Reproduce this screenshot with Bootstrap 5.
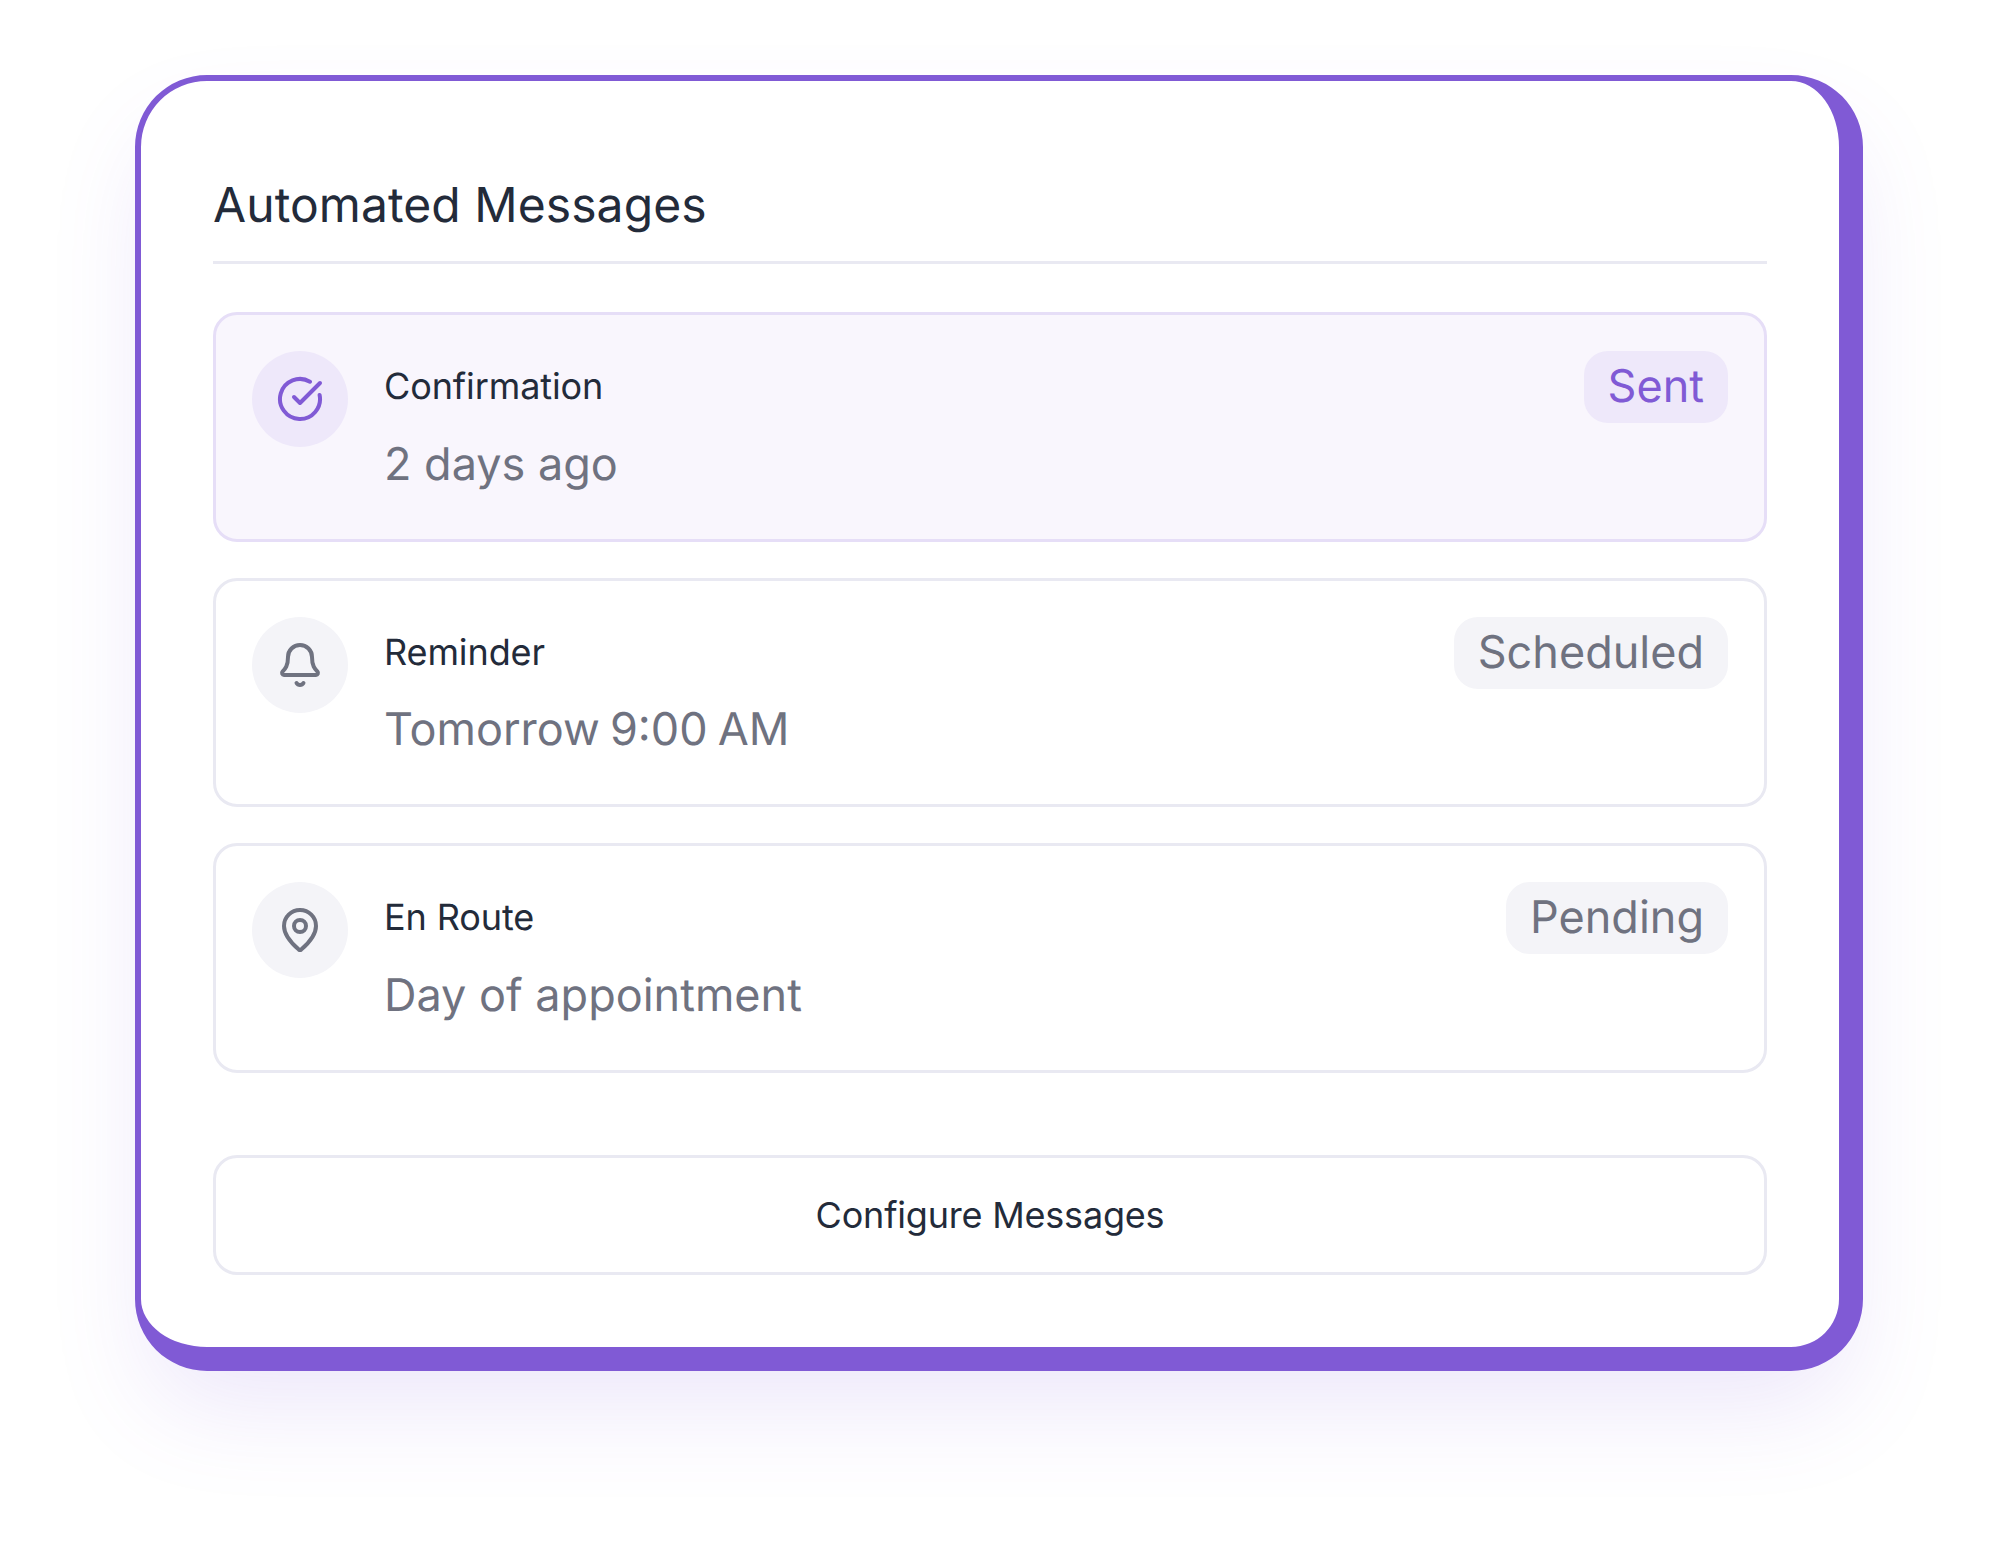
<!DOCTYPE html>
<html lang="en">
<head>
<meta charset="utf-8">
<title>Automated Messages</title>
<link rel="stylesheet" href="https://cdn.jsdelivr.net/npm/bootstrap@5.3.0/dist/css/bootstrap.min.css">
<style>
body { background:#fff; font-family:Inter,"Liberation Sans",sans-serif; color:#1f2937; padding:75px 135px; min-height:100vh; text-rendering:geometricPrecision; -webkit-font-smoothing:antialiased; }
.msg-panel { width:1728px; height:1296px; background:#fff; border:solid #805ad5; border-width:6px 24px 24px 6px; border-radius:72px; padding:72px; box-shadow:0 48px 100px -16px rgba(128,90,220,.15); }
.msg-title { font-size:48px; font-weight:400; line-height:72px; color:#232b3a; letter-spacing:.07px; margin:16px 0 48px; padding-bottom:20px; border-bottom:3px solid #e9e9f2; }
.msg-stack { gap:36px; }
.msg-item { border:3px solid #e9e9f2; border-radius:24px; padding:36px; height:229.5px; gap:36px; background:#fff; }
.msg-item.is-sent { background:#f9f6fd; border-color:#e6def7; }
.msg-ico { width:96px; height:96px; background:#f4f4f8; color:#6f7280; flex:none; }
.msg-ico svg { width:48px; height:48px; }
.is-sent .msg-ico { background:#eee8fa; color:#805ad5; }
.msg-name { font-size:36px; line-height:70px; margin-bottom:2px; font-weight:400; letter-spacing:-.1px; color:#232b3a; }
.msg-when { font-size:45px; line-height:67.5px; color:#6f7280; margin-top:8.5px; }
.msg-when-tight { word-spacing:-2.5px; }
.msg-tag { font-size:45px; line-height:70px; height:72px; padding:0 24px; border-radius:24px; background:#f4f4f8; color:#6f7280; }
.is-sent .msg-tag { background:#eee8fa; color:#805ad5; }
.msg-btn { display:block; width:100%; height:120px; margin-top:82.5px; font-size:36px; font-weight:400; letter-spacing:-.2px; color:#232b3a; background:#fff; border:3px solid #e9e9f2; border-radius:24px; }
.msg-btn:hover { background:#fff; border-color:#e9e9f2; color:#232b3a; }
</style>
</head>
<body>
<div class="msg-panel">
  <h2 class="msg-title">Automated Messages</h2>
  <div class="d-flex flex-column msg-stack">
    <div class="msg-item is-sent d-flex align-items-start">
      <div class="msg-ico rounded-circle d-flex align-items-center justify-content-center">
        <svg viewBox="0 0 24 24" fill="none" stroke="currentColor" stroke-width="2" stroke-linecap="round" stroke-linejoin="round"><path d="M21.801 10A10 10 0 1 1 17 3.335"/><path d="m9 11 3 3L22 4"/></svg>
      </div>
      <div class="flex-grow-1">
        <div class="msg-name">Confirmation</div>
        <div class="msg-when">2 days ago</div>
      </div>
      <span class="msg-tag">Sent</span>
    </div>
    <div class="msg-item d-flex align-items-start">
      <div class="msg-ico rounded-circle d-flex align-items-center justify-content-center">
        <svg viewBox="0 0 24 24" fill="none" stroke="currentColor" stroke-width="2" stroke-linecap="round" stroke-linejoin="round"><path d="M10.268 21a2 2 0 0 0 3.464 0"/><path d="M3.262 15.326A1 1 0 0 0 4 17h16a1 1 0 0 0 .74-1.673C19.41 13.956 18 12.499 18 8A6 6 0 0 0 6 8c0 4.499-1.411 5.956-2.738 7.326"/></svg>
      </div>
      <div class="flex-grow-1">
        <div class="msg-name">Reminder</div>
        <div class="msg-when msg-when-tight">Tomorrow 9:00 AM</div>
      </div>
      <span class="msg-tag">Scheduled</span>
    </div>
    <div class="msg-item d-flex align-items-start">
      <div class="msg-ico rounded-circle d-flex align-items-center justify-content-center">
        <svg viewBox="0 0 24 24" fill="none" stroke="currentColor" stroke-width="2" stroke-linecap="round" stroke-linejoin="round"><path d="M20 10c0 4.993-5.539 10.193-7.399 11.799a1 1 0 0 1-1.202 0C9.539 20.193 4 14.993 4 10a8 8 0 0 1 16 0"/><circle cx="12" cy="10" r="3"/></svg>
      </div>
      <div class="flex-grow-1">
        <div class="msg-name">En Route</div>
        <div class="msg-when">Day of appointment</div>
      </div>
      <span class="msg-tag">Pending</span>
    </div>
  </div>
  <button type="button" class="btn msg-btn">Configure Messages</button>
</div>
</body>
</html>
